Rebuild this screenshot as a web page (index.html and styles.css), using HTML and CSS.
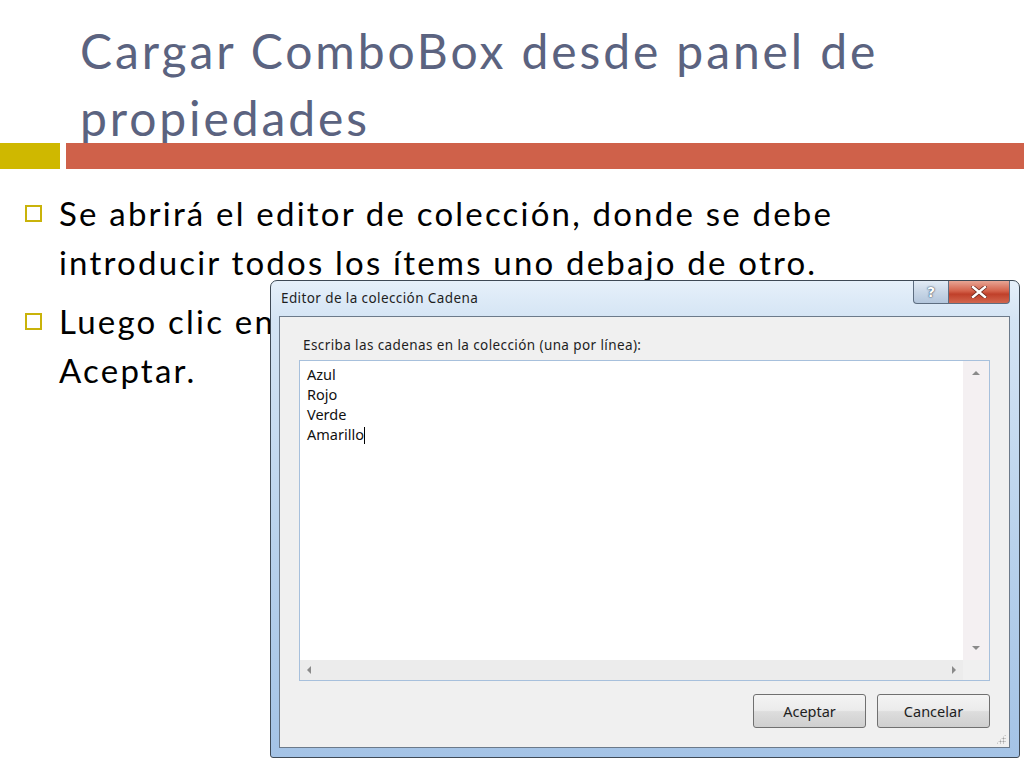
FILE: index.html
```html
<!DOCTYPE html>
<html lang="es">
<head>
    <meta charset="UTF-8">
    <title>Cargar ComboBox desde panel de propiedades</title>
    <link rel="stylesheet" href="styles.css">
</head>
<body>
    <div class="slide">
        <h1 class="title">Cargar ComboBox desde panel de<br>propiedades</h1>
        <div class="rule">
            <span class="rule-a"></span>
            <span class="rule-b"></span>
        </div>
        <ul class="points">
            <li>Se abrirá el editor de colección, donde se debe<br>introducir todos los ítems uno debajo de otro.</li>
            <li>Luego clic en<br>Aceptar.</li>
        </ul>

        <!-- ventana del editor, encima del texto -->
        <div class="window">
            <div class="titlebar">
                <span class="caption">Editor de la colección Cadena</span>
                <div class="controls">
                    <span class="btn-help">?</span>
                    <span class="btn-close">
                        <svg width="16" height="12" viewBox="0 0 16 12">
                            <path d="M2 1 L14 11 M14 1 L2 11" stroke="#6b2a20" stroke-width="4" stroke-linecap="square"/>
                            <path d="M2 1 L14 11 M14 1 L2 11" stroke="#fff" stroke-width="2.4" stroke-linecap="square"/>
                        </svg>
                    </span>
                </div>
            </div>
            <div class="client">
                <div class="prompt">Escriba las cadenas en la colección (una por línea):</div>
                <div class="editor">
                    <div class="editor-main">
                        <div class="lines">
                            <div>Azul</div>
                            <div>Rojo</div>
                            <div>Verde</div>
                            <div>Amarillo<span class="caret"></span></div>
                        </div>
                        <div class="vscroll">
                            <span class="arrow-up"></span>
                            <span class="arrow-down"></span>
                        </div>
                    </div>
                    <div class="hscroll">
                        <div class="htrack">
                            <span class="arrow-left"></span>
                            <span class="arrow-right"></span>
                        </div>
                        <div class="corner"></div>
                    </div>
                </div>
                <div class="actions">
                    <button class="win-btn">Aceptar</button>
                    <button class="win-btn">Cancelar</button>
                </div>
                <span class="grip"></span>
            </div>
        </div>
    </div>
</body>
</html>
```
FILE: styles.css
```css
body {
    margin: 0;
    background: #fff;
}
.slide {
    position: relative;
    width: 1024px;
    height: 768px;
    overflow: hidden;
    background: #fff;
    font-family: Lato, "Open Sans", sans-serif;
}
.title {
    margin: 0;
    padding: 17px 0 0 80px;
    height: 126px;
    box-sizing: border-box;
    font-size: 48px;
    font-weight: normal;
    line-height: 67px;
    color: #5b6380;
    letter-spacing: 2.9px;
    white-space: nowrap;
}
.rule {
    display: flex;
    gap: 6px;
    height: 26px;
    margin-top: 17px;
}
.rule-a {
    width: 60px;
    background: #cfb800;
}
.rule-b {
    flex: 1;
    background: #cf614a;
}
.points {
    list-style: none;
    margin: 0;
    padding: 20px 0 0 59px;
}
.points li {
    position: relative;
    font-size: 33px;
    line-height: 49px;
    color: #000;
    margin-bottom: 10px;
    letter-spacing: 2.2px;
    white-space: nowrap;
}
.points li::before {
    content: "";
    position: absolute;
    left: -34px;
    top: 16px;
    width: 13px;
    height: 13px;
    border: 2px solid #c9b30a;
}

/* ventana estilo Windows 7 */
.window {
    position: absolute;
    left: 270px;
    top: 280px;
    width: 750px;
    height: 478px;
    box-sizing: border-box;
    border: 1px solid #3e4955;
    border-radius: 7px 7px 3px 3px;
    background: linear-gradient(180deg, #e6f0fa 0%, #d4e4f4 8%, #b9d2ec 55%, #a4c3e6 100%);
    padding: 0 9px 9px 8px;
    display: flex;
    flex-direction: column;
    font-family: "Noto Sans", "Open Sans", sans-serif;
}
.titlebar {
    height: 35px;
    display: flex;
    justify-content: space-between;
    align-items: flex-start;
}
.caption {
    font-size: 13.5px;
    letter-spacing: 0.4px;
    color: #1e1e1e;
    margin: 8px 0 0 2px;
}
.controls {
    display: flex;
    margin-right: 0;
}
.btn-help, .btn-close {
    height: 23px;
    box-sizing: border-box;
    border: 1px solid #5d6d80;
    border-top: none;
    display: flex;
    align-items: center;
    justify-content: center;
}
.btn-help {
    width: 36px;
    border-radius: 0 0 0 4px;
    background: linear-gradient(180deg, #e2ebf5 0%, #c8d6e6 50%, #b3c6dc 100%);
    color: #fff;
    font-family: "DejaVu Sans", sans-serif;
    font-weight: bold;
    font-size: 14px;
    text-shadow: 0 0 2px #33475e, 0 0 1px #33475e;
}
.btn-close {
    width: 61px;
    border-left: none;
    border-radius: 0 0 4px 0;
    background: linear-gradient(180deg, #e8a594 0%, #d4624b 45%, #c0402a 60%, #d2664e 100%);
}
.client {
    position: relative;
    flex: 1;
    background: #f0f0f0;
    border: 1px solid #6c7a8a;
    padding: 0 19px 0 19px;
    display: flex;
    flex-direction: column;
}
.prompt {
    font-size: 13.5px;
    letter-spacing: 0.4px;
    color: #1e1e1e;
    margin: 19px 0 0 4px;
    height: 24px;
}
.editor {
    height: 321px;
    box-sizing: border-box;
    border: 1px solid #a7c0dc;
    background: #fff;
    display: flex;
    flex-direction: column;
}
.editor-main {
    flex: 1;
    display: flex;
}
.lines {
    flex: 1;
    padding: 3px 0 0 7px;
    font-size: 14.5px;
    line-height: 20px;
    color: #111;
}
.caret {
    display: inline-block;
    width: 1px;
    height: 17px;
    background: #000;
    vertical-align: -4px;
}
.vscroll {
    width: 26px;
    background: #f4f0f2;
    position: relative;
}
.arrow-up, .arrow-down, .arrow-left, .arrow-right {
    position: absolute;
    width: 0;
    height: 0;
}
.arrow-up {
    left: 9px;
    top: 10px;
    border: 4px solid transparent;
    border-bottom: 4px solid #8a8a8a;
    border-top: none;
}
.arrow-down {
    left: 9px;
    bottom: 10px;
    border: 4px solid transparent;
    border-top: 4px solid #8a8a8a;
    border-bottom: none;
}
.hscroll {
    height: 20px;
    display: flex;
}
.htrack {
    flex: 1;
    position: relative;
    background: #ececec;
}
.arrow-left {
    left: 7px;
    top: 6px;
    border: 4px solid transparent;
    border-right: 4px solid #8a8a8a;
    border-left: none;
}
.arrow-right {
    right: 7px;
    top: 6px;
    border: 4px solid transparent;
    border-left: 4px solid #8a8a8a;
    border-right: none;
}
.corner {
    width: 26px;
    background: #f0f0f0;
}
.actions {
    display: flex;
    justify-content: flex-end;
    gap: 11px;
    margin-top: 13px;
}
.win-btn {
    width: 113px;
    height: 34px;
    border: 1px solid #707070;
    border-radius: 3px;
    background: linear-gradient(180deg, #f4f4f4 0%, #ebebeb 48%, #dddddd 52%, #cfcfcf 100%);
    font-family: "Noto Sans", "Open Sans", sans-serif;
    font-size: 14.5px;
    color: #1e1e1e;
    padding: 0;
}
.grip {
    position: absolute;
    right: 3px;
    bottom: 3px;
    width: 10px;
    height: 10px;
    background: radial-gradient(circle, #a0a0a0 0.8px, transparent 1.2px) 0 0 / 3px 3px;
    clip-path: polygon(100% 0, 100% 100%, 0 100%);
}
```
